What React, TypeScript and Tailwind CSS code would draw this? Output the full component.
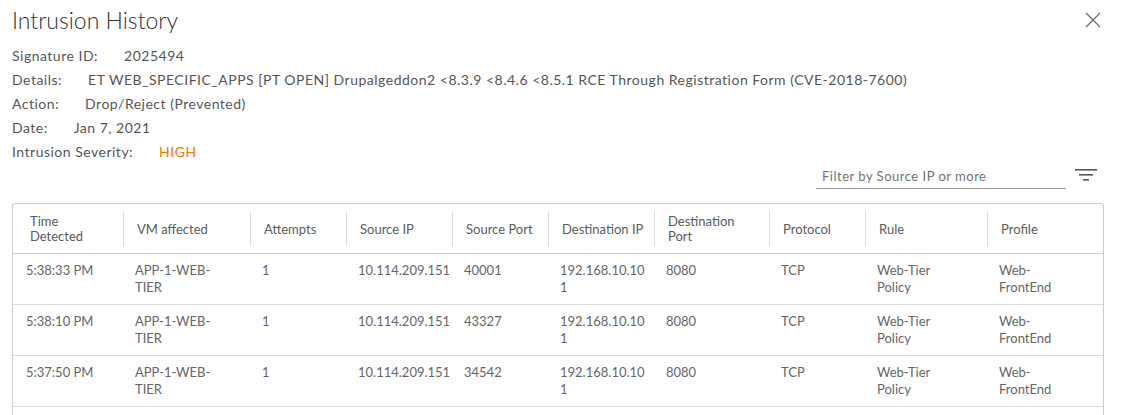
interface Hit {
  time: string;
  vm: string;
  attempts: string;
  srcIp: string;
  srcPort: string;
  dstIp: string;
  dstPort: string;
  protocol: string;
  rule: string;
  profile: string;
}

const details = [
  { label: "Signature ID:", value: "2025494" },
  {
    label: "Details:",
    value:
      "ET WEB_SPECIFIC_APPS [PT OPEN] Drupalgeddon2 <8.3.9 <8.4.6 <8.5.1 RCE Through Registration Form (CVE-2018-7600)",
  },
  { label: "Action:", value: "Drop/Reject (Prevented)" },
  { label: "Date:", value: "Jan 7, 2021" },
];

// header label + inner widths that reproduce the wrapping seen in the grid
const columns = [
  { title: "Time Detected", head: "w-[70px]", body: "w-[90px] pl-[13px]" },
  { title: "VM affected", head: "w-[100px]", body: "w-[88px]" },
  { title: "Attempts", head: "w-[80px]", body: "w-[80px]" },
  { title: "Source IP", head: "w-[88px]", body: "w-[92px]" },
  { title: "Source Port", head: "w-[80px]", body: "w-[80px]" },
  { title: "Destination IP", head: "w-[90px]", body: "w-[88px] break-all" },
  { title: "Destination Port", head: "w-[80px]", body: "w-[90px]" },
  { title: "Protocol", head: "w-[80px]", body: "w-[80px]" },
  { title: "Rule", head: "w-[100px]", body: "w-[80px]" },
  { title: "Profile", head: "w-[100px]", body: "w-[64px]" },
];

const hits: Hit[] = [
  ["5:38:33 PM", "40001"],
  ["5:38:10 PM", "43327"],
  ["5:37:50 PM", "34542"],
].map(([time, srcPort]) => ({
  time,
  vm: "APP-1-WEB-TIER",
  attempts: "1",
  srcIp: "10.114.209.151",
  srcPort,
  dstIp: "192.168.10.101",
  dstPort: "8080",
  protocol: "TCP",
  rule: "Web-Tier Policy",
  profile: "Web-FrontEnd",
}));

const cols = "grid grid-cols-[110px_127px_96px_106px_96px_106px_115px_96px_122px_1fr]";

function FilterIcon() {
  return (
    <svg width="22" height="12" viewBox="0 0 22 12" className="text-[#565656]">
      <rect x="0" y="0" width="22" height="1.6" fill="currentColor" />
      <rect x="4" y="5" width="14" height="1.6" fill="currentColor" />
      <rect x="8" y="10" width="6" height="1.6" fill="currentColor" />
    </svg>
  );
}

function CloseIcon() {
  return (
    <svg width="16" height="16" viewBox="0 0 16 16" className="text-[#6b6b6b]">
      <path d="M1 1L15 15M15 1L1 15" stroke="currentColor" strokeWidth="1.3" fill="none" />
    </svg>
  );
}

export default function App() {
  return (
    <div className="w-[1122px] h-[415px] overflow-hidden bg-white font-['Lato',sans-serif] text-[#565656]">
      <div className="flex items-start justify-between pl-3 pr-[21px] pt-[5px]">
        <h1 className="text-[23px] font-light text-[#333] leading-[30px]">Intrusion History</h1>
        <button className="mt-[7px]">
          <CloseIcon />
        </button>
      </div>

      <div className="mt-[9px] pl-3 text-[14px] leading-[24px] tracking-[0.5px]">
        {details.map((d) => (
          <div key={d.label} className="flex">
            <span>{d.label}</span>
            <span className="ml-[26px]">{d.value}</span>
          </div>
        ))}
        <div className="flex">
          <span>Intrusion Severity:</span>
          <span className="ml-[26px] text-[#f57600]">HIGH</span>
        </div>
      </div>

      <div className="mt-[3px] flex items-center justify-end pr-[25px]">
        <div className="w-[250px] border-b border-[#9a9a9a] pl-[6px] pb-[3px] text-[13px] leading-[18px] tracking-[0.5px] text-[#737373]">
          Filter by Source IP or more
        </div>
        <div className="ml-[9px] mb-[6px]">
          <FilterIcon />
        </div>
      </div>

      <div className="ml-3 mt-[14px] w-[1092px] rounded-t-[3px] border-x border-t border-[#ccc] pb-[12px] text-[13px]">
        <div className={`${cols} h-[50px] border-b border-[#ccc] text-[#5c5c5c]`}>
          {columns.map((c, i) => (
            <div
              key={c.title}
              className={
                i === 0
                  ? "my-[7px] flex items-center pl-[17px] pt-px leading-[15px]"
                  : "my-[7px] flex items-center border-l border-[#ddd] pl-[13px] pt-px leading-[15px]"
              }
            >
              <span className={c.head}>{c.title}</span>
            </div>
          ))}
        </div>
        {hits.map((r) => {
          const values = [r.time, r.vm, r.attempts, r.srcIp, r.srcPort, r.dstIp, r.dstPort, r.protocol, r.rule, r.profile];
          return (
            <div key={r.time} className={`${cols} h-[51px] border-b border-[#ddd] leading-[17px] text-[#666]`}>
              {values.map((v, i) => (
                <div key={i} className={`pt-[8px] ${i === 0 ? "" : "pl-[12px]"}`}>
                  <div className={columns[i].body}>{v}</div>
                </div>
              ))}
            </div>
          );
        })}
      </div>
    </div>
  );
}
